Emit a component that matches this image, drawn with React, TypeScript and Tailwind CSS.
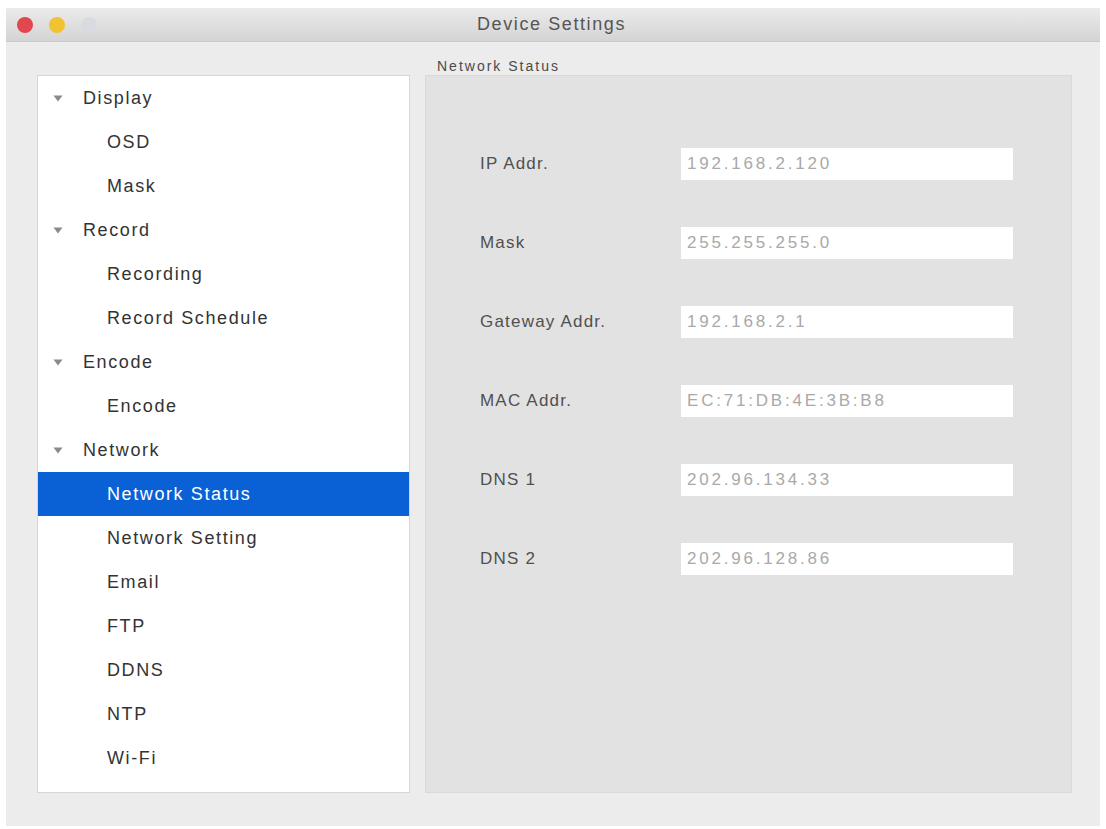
import React from "react";

type Item = { label: string; level: 0 | 1; selected?: boolean };

const items: Item[] = [
  { label: "Display", level: 0 },
  { label: "OSD", level: 1 },
  { label: "Mask", level: 1 },
  { label: "Record", level: 0 },
  { label: "Recording", level: 1 },
  { label: "Record Schedule", level: 1 },
  { label: "Encode", level: 0 },
  { label: "Encode", level: 1 },
  { label: "Network", level: 0 },
  { label: "Network Status", level: 1, selected: true },
  { label: "Network Setting", level: 1 },
  { label: "Email", level: 1 },
  { label: "FTP", level: 1 },
  { label: "DDNS", level: 1 },
  { label: "NTP", level: 1 },
  { label: "Wi-Fi", level: 1 },
  { label: "System Setting", level: 1 },
];

const fields = [
  { label: "IP Addr.", value: "192.168.2.120" },
  { label: "Mask", value: "255.255.255.0" },
  { label: "Gateway Addr.", value: "192.168.2.1" },
  { label: "MAC Addr.", value: "EC:71:DB:4E:3B:B8" },
  { label: "DNS 1", value: "202.96.134.33" },
  { label: "DNS 2", value: "202.96.128.86" },
];

function Triangle() {
  return (
    <svg width="10" height="7" viewBox="0 0 10 7" className="shrink-0">
      <path d="M0.5 0.5 L9.5 0.5 L5 6.5 Z" fill="#8a8a8a" />
    </svg>
  );
}

export default function App() {
  return (
    <div
      className="w-full h-[829px] bg-white pt-[8px] pl-[6px] overflow-hidden"
      style={{ fontFamily: '"Liberation Sans", Arial, sans-serif' }}
    >
      <div className="w-[1094px] h-[818px] flex flex-col bg-[#ececec]">
        {/* Title bar */}
        <div className="h-[34px] shrink-0 flex items-center bg-gradient-to-b from-[#ebebeb] to-[#d4d4d4] border-b border-[#c9c9c9] pl-[11px]">
          <div className="flex items-center gap-[16px] w-[120px]">
            <div className="w-[16px] h-[16px] rounded-full bg-[#e2474f]" />
            <div className="w-[16px] h-[16px] rounded-full bg-[#f1c232]" />
            <div className="w-[16px] h-[16px] rounded-full bg-[#dadae2]" />
          </div>
          <div className="flex-1 flex justify-center pr-[134px]">
            <span className="text-[18px] tracking-[1.6px] text-[#555555]">Device Settings</span>
          </div>
        </div>

        {/* Body */}
        <div className="flex-1 flex pt-[15px] pl-[31px] gap-[15px]">
          {/* Sidebar */}
          <div className="mt-[18px] w-[373px] h-[718px] bg-white border border-[#d6d6d6] overflow-hidden">
            {items.map((it, i) => (
              <div
                key={i}
                className={
                  "h-[44px] flex items-center text-[18px] tracking-[1.6px] " +
                  (it.selected ? "bg-[#0a61d6] text-white" : "text-[#333333]")
                }
              >
                {it.level === 0 ? (
                  <div className="flex items-center pl-[15px] gap-[20px]">
                    <Triangle />
                    <span>{it.label}</span>
                  </div>
                ) : (
                  <span className="pl-[69px]">{it.label}</span>
                )}
              </div>
            ))}
          </div>

          {/* Right column */}
          <div className="w-[647px] flex flex-col">
            <div className="h-[18px] leading-[18px] pl-[12px] text-[14px] tracking-[2px] text-[#4a4a4a]">
              Network Status
            </div>
            <div className="h-[718px] bg-[#e2e2e2] border border-[#d9d9d9] pt-[72px] pl-[54px] flex flex-col gap-[47px]">
              {fields.map((f) => (
                <div key={f.label} className="flex items-center h-[32px]">
                  <div className="w-[201px] text-[17px] tracking-[1.2px] text-[#505050]">{f.label}</div>
                  <div className="w-[332px] h-[32px] bg-white flex items-center pl-[6px] text-[17px] tracking-[2.8px] text-[#a9a9a9]">
                    {f.value}
                  </div>
                </div>
              ))}
            </div>
          </div>
        </div>
      </div>
    </div>
  );
}
